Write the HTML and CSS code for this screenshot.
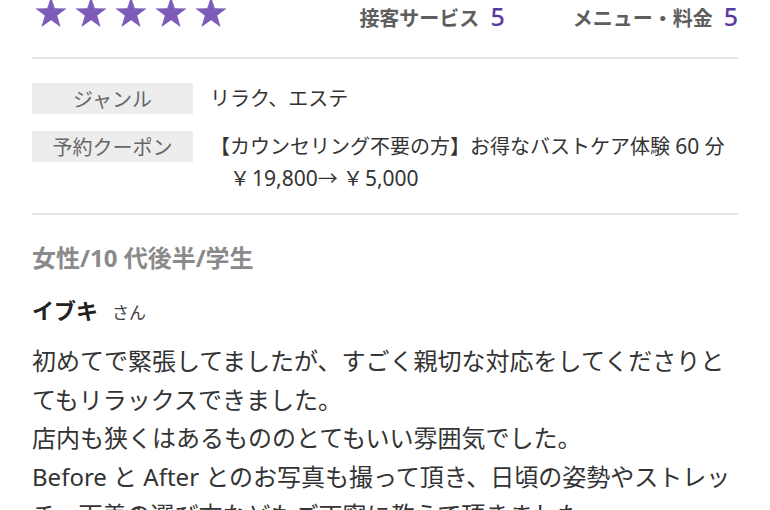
FILE: index.html
```html
<!DOCTYPE html>
<html lang="ja">
<head>
<meta charset="utf-8">
<link rel="stylesheet" href="styles.css">
</head>
<body>
<div class="page">
  <div class="rating">
    <div class="stars">
      <svg class="star" viewBox="0 0 32 31"><polygon points="16,0 19.8,11.2 31.6,11.4 22.2,18.6 25.6,30 16,23.2 6.4,30 9.8,18.6 0.4,11.4 12.2,11.2"/></svg>
      <svg class="star" viewBox="0 0 32 31"><polygon points="16,0 19.8,11.2 31.6,11.4 22.2,18.6 25.6,30 16,23.2 6.4,30 9.8,18.6 0.4,11.4 12.2,11.2"/></svg>
      <svg class="star" viewBox="0 0 32 31"><polygon points="16,0 19.8,11.2 31.6,11.4 22.2,18.6 25.6,30 16,23.2 6.4,30 9.8,18.6 0.4,11.4 12.2,11.2"/></svg>
      <svg class="star" viewBox="0 0 32 31"><polygon points="16,0 19.8,11.2 31.6,11.4 22.2,18.6 25.6,30 16,23.2 6.4,30 9.8,18.6 0.4,11.4 12.2,11.2"/></svg>
      <svg class="star" viewBox="0 0 32 31"><polygon points="16,0 19.8,11.2 31.6,11.4 22.2,18.6 25.6,30 16,23.2 6.4,30 9.8,18.6 0.4,11.4 12.2,11.2"/></svg>
    </div>
    <div class="scores">
      <span class="score"><span class="score-label">接客サービス</span><span class="score-num">5</span></span>
      <span class="score"><span class="score-label">メニュー・料金</span><span class="score-num">5</span></span>
    </div>
  </div>

  <div class="info">
    <div class="info-row">
      <div class="info-label">ジャンル</div>
      <div class="info-value">リラク、エステ</div>
    </div>
    <div class="info-row">
      <div class="info-label">予約クーポン</div>
      <div class="info-value">【カウンセリング不要の方】お得なバストケア体験 <span class="num">60</span> 分<br><span class="price">￥<span class="num gap">19,800</span>→ ￥<span class="num gap">5,000</span></span></div>
    </div>
  </div>

  <div class="review">
    <div class="profile">女性/10 代後半/学生</div>
    <div class="name">イブキ<span class="san">さん</span></div>
    <p class="body-text">初めてで緊張してましたが、すごく親切な対応をしてくださりとてもリラックスできました。<br>店内も狭くはあるもののとてもいい雰囲気でした。<br>Before と After とのお写真も撮って頂き、日頃の姿勢やストレッチ、下着の選び方などもご丁寧に教えて頂きました。</p>
  </div>
</div>
</body>
</html>
```

FILE: styles.css
```css
html, body {
  margin: 0;
  padding: 0;
  background: #ffffff;
}
body {
  font-family: "Noto Sans", "Noto Sans CJK JP", sans-serif;
  color: #333333;
  overflow: hidden;
  height: 510px;
}
.page {
  padding: 0 32px;
}
.rating {
  display: flex;
  align-items: flex-start;
  justify-content: space-between;
  height: 32px;
  margin-top: -4px;
  padding-bottom: 29px;
  border-bottom: 2px solid #e4e4e4;
}
.stars {
  display: flex;
  gap: 8px;
  padding-left: 3px;
  padding-top: 1px;
}
.star {
  width: 32px;
  height: 31px;
  fill: #7d5cb9;
}
.scores {
  display: flex;
  gap: 68px;
  align-items: baseline;
  padding-top: 3px;
}
.score {
  display: flex;
  align-items: baseline;
  gap: 11px;
}
.score-label {
  font-family: "Noto Sans CJK JP", sans-serif;
  font-size: 20px;
  font-weight: 700;
  color: #5e5e5e;
}
.score-num {
  font-family: "Noto Sans", sans-serif;
  font-size: 25px;
  font-weight: 500;
  color: #5a3a9c;
}
.info {
  display: flex;
  flex-direction: column;
  gap: 16px;
  padding: 24px 0 18px;
  border-bottom: 2px solid #e4e4e4;
}
.info-row {
  display: flex;
  align-items: flex-start;
  gap: 17px;
}
.info-label {
  flex: 0 0 161px;
  height: 31px;
  background: #ededed;
  color: #666666;
  font-family: "Noto Sans CJK JP", sans-serif;
  font-size: 20px;
  line-height: 31px;
  text-align: center;
}
.info-value {
  font-size: 20px;
  line-height: 32px;
  height: 64px;
  color: #333333;
}
.info-row:first-child .info-value {
  height: auto;
}
.num {
  font-size: 21px;
  line-height: 20px;
}
.gap {
  margin-left: 2px;
}
.price {
  padding-left: 20px;
}
.review {
  padding-top: 28px;
}
.profile {
  font-size: 24px;
  font-weight: 700;
  color: #8a8a8a;
  line-height: 30px;
}
.name {
  margin-top: 22px;
  font-size: 22px;
  font-weight: 700;
  color: #222222;
  line-height: 30px;
}
.san {
  font-size: 17px;
  font-weight: 400;
  margin-left: 14px;
  color: #444444;
}
.body-text {
  margin: 14px 0 0;
  font-size: 24px;
  line-height: 38.5px;
  color: #333333;
}
```
